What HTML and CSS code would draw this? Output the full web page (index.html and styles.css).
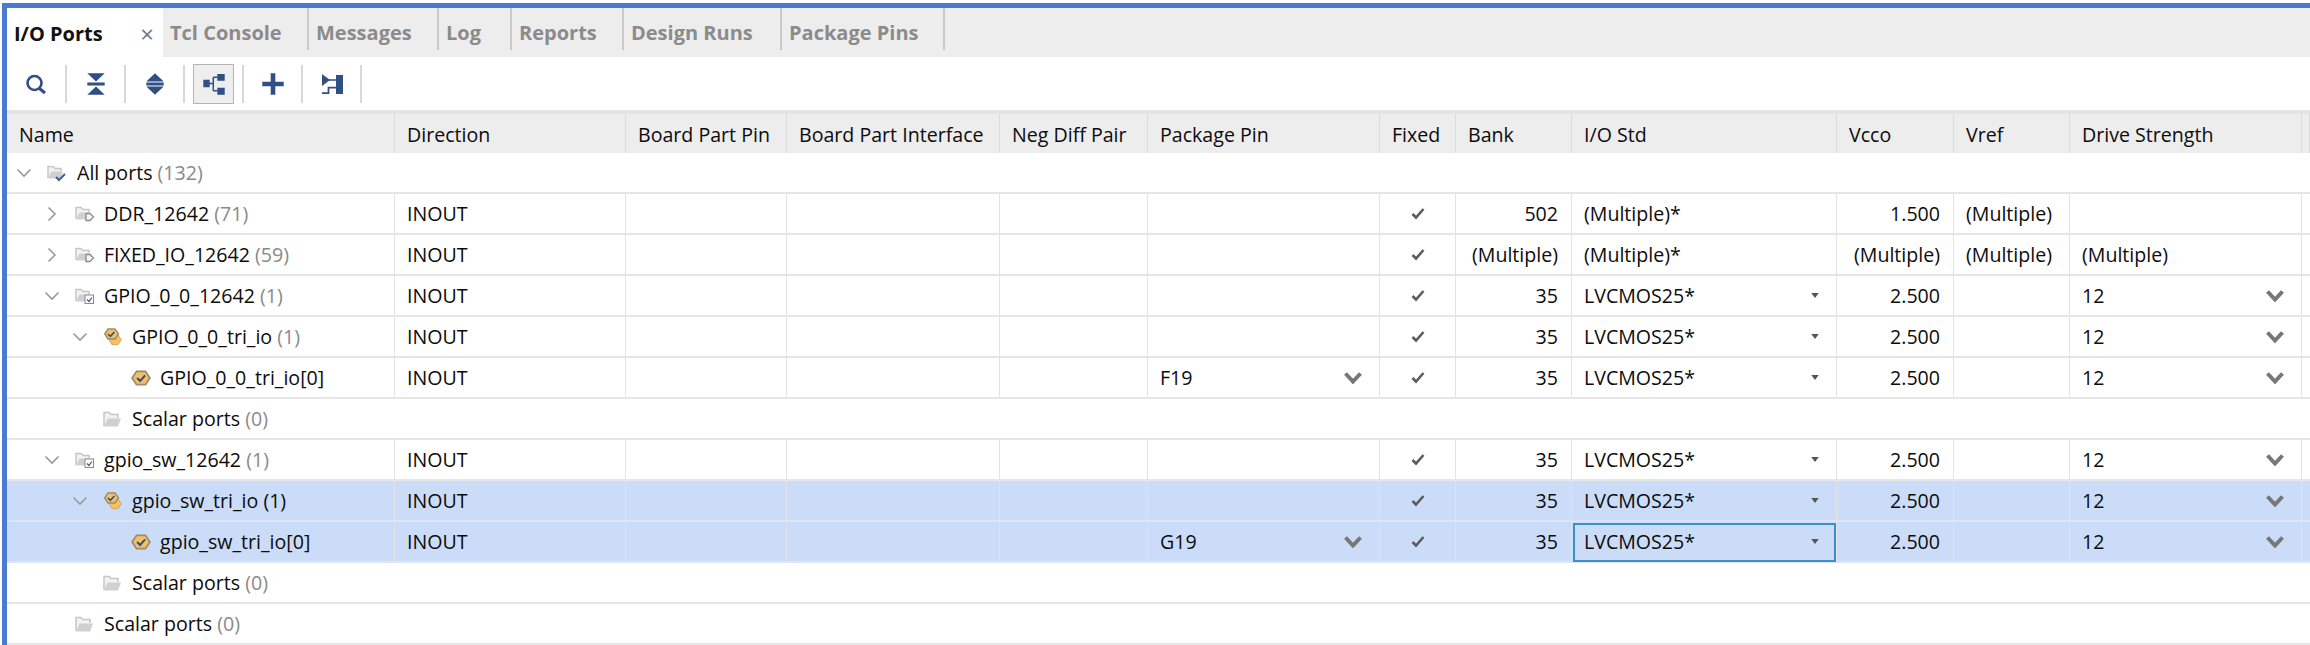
FILE: index.html
```html
<!DOCTYPE html>
<html lang="en">
<head>
<meta charset="utf-8">
<title>I/O Ports</title>
<link rel="stylesheet" href="styles.css">
</head>
<body>
<svg class="defs" width="0" height="0" aria-hidden="true">
  <defs>
    <symbol id="chev-d" viewBox="0 0 16 16"><path d="M1.500 4.500 8 11l6.500-6.500" fill="none" stroke="#9a9a9a" stroke-width="1.600"/></symbol>
    <symbol id="chev-r" viewBox="0 0 16 16"><path d="M4.500 1.500 11 8l-6.500 6.500" fill="none" stroke="#9a9a9a" stroke-width="1.600"/></symbol>
    <symbol id="folder" viewBox="0 0 20 18"><path d="M1 16V2.500h5l2 2h7V8" fill="#f2f2f2" stroke="#c6c6c6" stroke-width="1.500"/><path d="M4.500 8.500H18l-3 8H1z" fill="#d0d0d0"/></symbol>
    <symbol id="folder-check" viewBox="0 0 20 18"><path d="M1 14V2.500h5l2 2h6V7" fill="#f2f2f2" stroke="#c6c6c6" stroke-width="1.500"/><path d="M4.500 7.500H16l-2.500 7H1z" fill="#d0d0d0"/><path d="M9 13l3 3 6-6" fill="none" stroke="#3a5f96" stroke-width="2"/></symbol>
    <symbol id="folder-port" viewBox="0 0 20 18"><path d="M1 14V2.500h5l2 2h6V7" fill="#f2f2f2" stroke="#c6c6c6" stroke-width="1.500"/><path d="M4.500 7.500H16l-2.500 7H1z" fill="#d0d0d0"/><path d="M11 8.500h4l3.500 3.500-3.500 3.500h-4z" fill="#f4f4f4" stroke="#8a8a8a" stroke-width="1.300"/></symbol>
    <symbol id="folder-doc" viewBox="0 0 20 18"><path d="M1 14V2.500h5l2 2h6V7" fill="#f2f2f2" stroke="#c6c6c6" stroke-width="1.500"/><path d="M4.500 7.500H16l-2.500 7H1z" fill="#d0d0d0"/><rect x="10" y="8" width="8.500" height="8.500" fill="#fff" stroke="#8a8a8a"/><path d="M12 12.500l2 2 2.800-4" fill="none" stroke="#3a5f96" stroke-width="1.300"/></symbol>
    <symbol id="hex" viewBox="0 0 18 16"><path d="M5 2h8l4 6-4 6H5L1 8z" fill="#f5c064" stroke="#9a8a70" stroke-width="1.600"/><path d="M5.500 8l2.700 2.700 4.500-5" fill="none" stroke="#2f4f85" stroke-width="1.800"/></symbol>
    <symbol id="hex2" viewBox="0 0 18 18"><path d="M8 7h6l3.300 4.800-3.300 4.900H8l-3-4.900z" fill="#f5c064" stroke="#cfa865" stroke-width="1"/><path d="M4 1h7l3.500 5L11 11H4L.8 6z" fill="#f5c064" stroke="#9a8a70" stroke-width="1.400"/><path d="M4 6l2.400 2.400 4-4.400" fill="none" stroke="#2f4f85" stroke-width="1.600"/></symbol>
    <symbol id="tick" viewBox="0 0 14 12"><path d="M1.500 6 5 9.500l7.500-8.500" fill="none" stroke="#5c5c5c" stroke-width="2.600"/></symbol>
    <symbol id="combo" viewBox="0 0 18 12"><path d="M1.500 1.500 9 9.500l7.500-8" fill="none" stroke="#777" stroke-width="4"/></symbol>
    <symbol id="caret" viewBox="0 0 6 4"><path d="M0 0h6L3 4z" fill="#555"/></symbol>
  </defs>
</svg>
<div class="panel">
  <nav class="tabs">
    <div class="tab active"><span>I/O Ports</span><span class="close">×</span></div>
    <div class="tab t-tcl">Tcl Console</div>
    <div class="tab t-msg">Messages</div>
    <div class="tab t-log">Log</div>
    <div class="tab t-rep">Reports</div>
    <div class="tab t-run">Design Runs</div>
    <div class="tab t-pin">Package Pins</div>
  </nav>
  <div class="toolbar">
    <button class="tool"><svg class="ticon" viewBox="0 0 24 24"><circle cx="9.500" cy="11" r="7" fill="none" stroke="#2f4f85" stroke-width="2.600"/><path d="M14.500 16.500 20 21" stroke="#2f4f85" stroke-width="3"/></svg></button>
    <button class="tool"><svg class="ticon" viewBox="0 0 24 24"><path d="M3.300 1.300h17.400L12 9.500zM3.300 10.500h17.400v3H3.300zM3.300 22.700h17.400L12 14.500z" fill="#2f4f85"/></svg></button>
    <button class="tool"><svg class="ticon" viewBox="0 0 24 24"><path d="M12 1.300l8.700 8.200H3.300zM3.300 10.500h17.400v3H3.300zM3.300 14.500h17.400L12 22.700z" fill="#2f4f85"/></svg></button>
    <button class="tool on"><span class="pressed"><svg class="ticon" viewBox="0 0 24 24"><path d="M1.300 7.800h6.400v7.400H1.300zM15.300 2h7.400v6.700h-7.400zM15.300 15.700h7.400v7h-7.400z" fill="#2f4f85"/><path d="M7 11.500h4.300M11.300 5.300v13.400M11.300 5.300h4M11.300 18.700h4" fill="none" stroke="#2f4f85" stroke-width="1.500"/></svg></span></button>
    <button class="tool"><svg class="ticon" viewBox="0 0 24 24"><path d="M9.700 1.300h4.600v8.400h8.400v4.600h-8.400v8.400H9.700v-8.400H1.300V9.700h8.400z" fill="#2f4f85"/></svg></button>
    <button class="tool"><svg class="ticon" viewBox="0 0 24 24"><path d="M2 2l8 6-8 6zM16 3h7v19h-7z" fill="#2f4f85"/><path d="M9 8h8M2 21.200h6.500v-5.500H17" fill="none" stroke="#2f4f85" stroke-width="1.700"/></svg></button>
  </div>
  <div class="strip"></div>
  <table class="grid">
    <colgroup>
      <col class="c-name"><col class="c-dir"><col class="c-bpp"><col class="c-bpi"><col class="c-neg"><col class="c-pin"><col class="c-fix"><col class="c-bank"><col class="c-std"><col class="c-vcco"><col class="c-vref"><col class="c-drv"><col class="c-end">
    </colgroup>
    <thead>
      <tr><th>Name</th><th>Direction</th><th>Board Part Pin</th><th>Board Part Interface</th><th>Neg Diff Pair</th><th>Package Pin</th><th class="th-fix">Fixed</th><th>Bank</th><th>I/O Std</th><th>Vcco</th><th>Vref</th><th>Drive Strength</th><th></th></tr>
    </thead>
    <tbody>
      <tr><td colspan="13"><div class="name d0"><svg class="chev"><use href="#chev-d"/></svg><svg class="nicon"><use href="#folder-check"/></svg><span>All ports <i>(132)</i></span></div></td></tr>
      <tr><td><div class="name d1"><svg class="chev"><use href="#chev-r"/></svg><svg class="nicon"><use href="#folder-port"/></svg><span>DDR_12642 <i>(71)</i></span></div></td><td>INOUT</td><td></td><td></td><td></td><td></td><td class="ctr"><svg class="tick"><use href="#tick"/></svg></td><td class="num">502</td><td>(Multiple)*</td><td class="num">1.500</td><td>(Multiple)</td><td></td><td></td></tr>
      <tr><td><div class="name d1"><svg class="chev"><use href="#chev-r"/></svg><svg class="nicon"><use href="#folder-port"/></svg><span>FIXED_IO_12642 <i>(59)</i></span></div></td><td>INOUT</td><td></td><td></td><td></td><td></td><td class="ctr"><svg class="tick"><use href="#tick"/></svg></td><td class="num">(Multiple)</td><td>(Multiple)*</td><td class="num">(Multiple)</td><td>(Multiple)</td><td>(Multiple)</td><td></td></tr>
      <tr><td><div class="name d1"><svg class="chev"><use href="#chev-d"/></svg><svg class="nicon"><use href="#folder-doc"/></svg><span>GPIO_0_0_12642 <i>(1)</i></span></div></td><td>INOUT</td><td></td><td></td><td></td><td></td><td class="ctr"><svg class="tick"><use href="#tick"/></svg></td><td class="num">35</td><td><div class="sel">LVCMOS25*<svg class="caret"><use href="#caret"/></svg></div></td><td class="num">2.500</td><td></td><td><div class="sel">12<svg class="combo"><use href="#combo"/></svg></div></td><td></td></tr>
      <tr><td><div class="name d2"><svg class="chev"><use href="#chev-d"/></svg><svg class="nicon"><use href="#hex2"/></svg><span>GPIO_0_0_tri_io <i>(1)</i></span></div></td><td>INOUT</td><td></td><td></td><td></td><td></td><td class="ctr"><svg class="tick"><use href="#tick"/></svg></td><td class="num">35</td><td><div class="sel">LVCMOS25*<svg class="caret"><use href="#caret"/></svg></div></td><td class="num">2.500</td><td></td><td><div class="sel">12<svg class="combo"><use href="#combo"/></svg></div></td><td></td></tr>
      <tr><td><div class="name d3"><svg class="nicon"><use href="#hex"/></svg><span>GPIO_0_0_tri_io[0]</span></div></td><td>INOUT</td><td></td><td></td><td></td><td><div class="sel">F19<svg class="combo"><use href="#combo"/></svg></div></td><td class="ctr"><svg class="tick"><use href="#tick"/></svg></td><td class="num">35</td><td><div class="sel">LVCMOS25*<svg class="caret"><use href="#caret"/></svg></div></td><td class="num">2.500</td><td></td><td><div class="sel">12<svg class="combo"><use href="#combo"/></svg></div></td><td></td></tr>
      <tr><td colspan="13"><div class="name d2"><svg class="nicon"><use href="#folder"/></svg><span>Scalar ports <i>(0)</i></span></div></td></tr>
      <tr><td><div class="name d1"><svg class="chev"><use href="#chev-d"/></svg><svg class="nicon"><use href="#folder-doc"/></svg><span>gpio_sw_12642 <i>(1)</i></span></div></td><td>INOUT</td><td></td><td></td><td></td><td></td><td class="ctr"><svg class="tick"><use href="#tick"/></svg></td><td class="num">35</td><td><div class="sel">LVCMOS25*<svg class="caret"><use href="#caret"/></svg></div></td><td class="num">2.500</td><td></td><td><div class="sel">12<svg class="combo"><use href="#combo"/></svg></div></td><td></td></tr>
      <tr class="picked"><td><div class="name d2"><svg class="chev"><use href="#chev-d"/></svg><svg class="nicon"><use href="#hex2"/></svg><span>gpio_sw_tri_io (1)</span></div></td><td>INOUT</td><td></td><td></td><td></td><td></td><td class="ctr"><svg class="tick"><use href="#tick"/></svg></td><td class="num">35</td><td><div class="sel">LVCMOS25*<svg class="caret"><use href="#caret"/></svg></div></td><td class="num">2.500</td><td></td><td><div class="sel">12<svg class="combo"><use href="#combo"/></svg></div></td><td></td></tr>
      <tr class="picked"><td><div class="name d3"><svg class="nicon"><use href="#hex"/></svg><span>gpio_sw_tri_io[0]</span></div></td><td>INOUT</td><td></td><td></td><td></td><td><div class="sel">G19<svg class="combo"><use href="#combo"/></svg></div></td><td class="ctr"><svg class="tick"><use href="#tick"/></svg></td><td class="num">35</td><td class="focus"><div class="sel">LVCMOS25*<svg class="caret"><use href="#caret"/></svg></div></td><td class="num">2.500</td><td></td><td><div class="sel">12<svg class="combo"><use href="#combo"/></svg></div></td><td></td></tr>
      <tr><td colspan="13"><div class="name d2"><svg class="nicon"><use href="#folder"/></svg><span>Scalar ports <i>(0)</i></span></div></td></tr>
      <tr><td colspan="13"><div class="name d1"><svg class="nicon"><use href="#folder"/></svg><span>Scalar ports <i>(0)</i></span></div></td></tr>
    </tbody>
  </table>
</div>
</body>
</html>
```
FILE: styles.css
```css
html, body {
  margin: 0;
  padding: 0;
  background: #fff;
}
body {
  width: 2310px;
  height: 645px;
  overflow: hidden;
  font-family: "Open Sans", "Noto Sans", sans-serif;
  font-size: 19.6px;
  color: #0c0c0c;
}
.defs { position: absolute; }
.panel {
  margin: 3px 0 0 2px;
  border-top: 5px solid #4a7bce;
  border-left: 5px solid #4a7bce;
  width: 2303px;
}
.tabs {
  display: flex;
  height: 49px;
  background: #ededed;
}
.tab {
  box-sizing: border-box;
  display: flex;
  align-items: center;
  height: 42px;
  padding-left: 7px;
  padding-top: 7px;
  font-weight: 700;
  font-size: 20px;
  color: #8b8b8b;
  border-right: 2px solid #c9c9c9;
}
.tab.active {
  width: 156px;
  height: 49px;
  background: #fff;
  color: #111;
  border-right: 0;
  justify-content: space-between;
  padding: 1px 9px 0 7px;
}
.close { color: #777; font-weight: 400; font-size: 24px; }
.t-tcl { width: 146px; padding-left: 7px; }
.t-msg { width: 130px; }
.t-log { width: 73px; }
.t-rep { width: 112px; }
.t-run { width: 158px; }
.t-pin { width: 163px; }
.toolbar {
  display: flex;
  align-items: center;
  height: 53px;
  padding-left: 1px;
}
.tool {
  width: 59px;
  height: 38px;
  padding: 0;
  border: 0;
  border-right: 2px solid #d8d8d8;
  background: none;
  display: flex;
  align-items: center;
  justify-content: center;
  flex: none;
}
.ticon { width: 24px; height: 24px; display: block; }
.pressed {
  width: 41px;
  height: 40px;
  box-sizing: border-box;
  background: #eee;
  border: 1.5px solid #b5b5b5;
  display: flex;
  align-items: center;
  justify-content: center;
}
.strip { height: 4px; background: #e4e4e4; }
.grid {
  table-layout: fixed;
  border-collapse: separate;
  border-spacing: 0;
  width: 2303px;
}
.c-name { width: 388px; }
.c-dir { width: 231px; }
.c-bpp { width: 161px; }
.c-bpi { width: 213px; }
.c-neg { width: 148px; }
.c-pin { width: 232px; }
.c-fix { width: 76px; }
.c-bank { width: 116px; }
.c-std { width: 265px; }
.c-vcco { width: 117px; }
.c-vref { width: 116px; }
.c-drv { width: 232px; }
.c-end { width: 8px; }
th {
  box-sizing: border-box;
  height: 39px;
  padding: 2px 0 0 12px;
  background: #ededed;
  border-right: 1px solid #dcdcdc;
  text-align: left;
  font-weight: 400;
  white-space: nowrap;
}
td {
  box-sizing: border-box;
  height: 41px;
  padding: 0 12px;
  border-right: 1px solid #e3e3e3;
  border-bottom: 2px solid #e6e6e6;
  white-space: nowrap;
}
td[colspan] { padding: 0; border-right: 0; }
td:first-child { padding: 0; }
td:last-child { padding: 0; border-right: 0; }
td.num { text-align: right; padding-right: 13px; }
td.ctr { text-align: center; padding: 0; }
.name { display: flex; align-items: center; height: 39px; position: relative; }
.name i { font-style: normal; color: #8a8a8a; }
.chev { position: absolute; width: 16px; height: 16px; top: 12px; }
.nicon { width: 20px; height: 18px; margin-right: 9px; flex: none; }
.d0 { padding-left: 40px; }
.d0 .nicon { margin-right: 10px; }
.d0 .chev { left: 9px; }
.d1 { padding-left: 68px; }
.d1 .chev { left: 37px; }
.d2 { padding-left: 96px; }
.d2 .chev { left: 65px; }
.d3 { padding-left: 124px; }
.tick { width: 14px; height: 12px; display: block; margin: 0 auto; }
.sel { display: flex; align-items: center; justify-content: space-between; }
.combo { width: 18px; height: 12px; margin-right: 5px; }
.caret { width: 8px; height: 5px; margin-right: 5px; }
.picked td { background: #cbdcf9; border-bottom-color: #dbe5f6; }
.focus { outline: 2px solid #3d8fc9; outline-offset: -3px; }
```
